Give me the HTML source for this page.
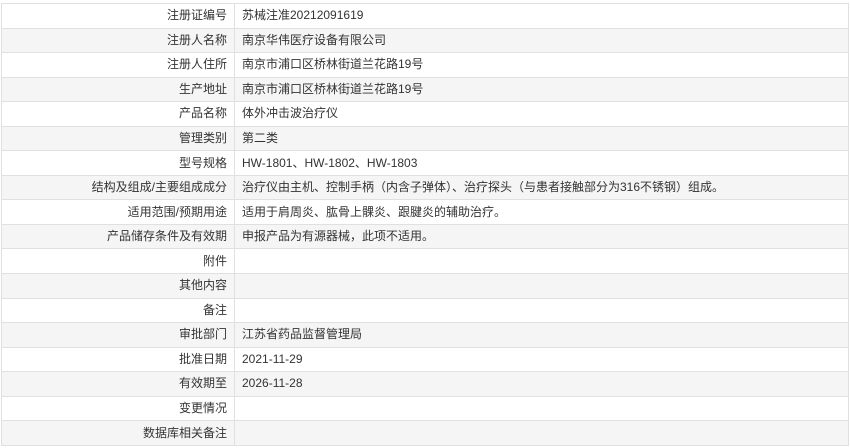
<!DOCTYPE html>
<html><head><meta charset="utf-8"><style>
body{margin:0;background:#fff;font-family:"Liberation Sans","Noto Sans CJK SC",sans-serif;font-size:12px;color:#333;}
table{position:absolute;left:1px;top:3px;width:848px;border-collapse:collapse;}
td{border:1px solid #e0e0e0;height:24.55px;padding:0;line-height:23px;box-sizing:border-box;}
td.l{width:233px;text-align:right;padding-right:7px;}
td.v{padding-left:7px;}
tr:nth-child(even) td{background:#f5f5f5;}
</style></head><body>
<table>
<tr><td class="l">注册证编号</td><td class="v">苏械注准20212091619</td></tr>
<tr><td class="l">注册人名称</td><td class="v">南京华伟医疗设备有限公司</td></tr>
<tr><td class="l">注册人住所</td><td class="v">南京市浦口区桥林街道兰花路19号</td></tr>
<tr><td class="l">生产地址</td><td class="v">南京市浦口区桥林街道兰花路19号</td></tr>
<tr><td class="l">产品名称</td><td class="v">体外冲击波治疗仪</td></tr>
<tr><td class="l">管理类别</td><td class="v">第二类</td></tr>
<tr><td class="l">型号规格</td><td class="v">HW-1801、HW-1802、HW-1803</td></tr>
<tr><td class="l">结构及组成/主要组成成分</td><td class="v">治疗仪由主机、控制手柄（内含子弹体）、治疗探头（与患者接触部分为316不锈钢）组成。</td></tr>
<tr><td class="l">适用范围/预期用途</td><td class="v">适用于肩周炎、肱骨上髁炎、跟腱炎的辅助治疗。</td></tr>
<tr><td class="l">产品储存条件及有效期</td><td class="v">申报产品为有源器械，此项不适用。</td></tr>
<tr><td class="l">附件</td><td class="v"></td></tr>
<tr><td class="l">其他内容</td><td class="v"></td></tr>
<tr><td class="l">备注</td><td class="v"></td></tr>
<tr><td class="l">审批部门</td><td class="v">江苏省药品监督管理局</td></tr>
<tr><td class="l">批准日期</td><td class="v">2021-11-29</td></tr>
<tr><td class="l">有效期至</td><td class="v">2026-11-28</td></tr>
<tr><td class="l">变更情况</td><td class="v"></td></tr>
<tr><td class="l">数据库相关备注</td><td class="v"></td></tr>
</table>
</body></html>
